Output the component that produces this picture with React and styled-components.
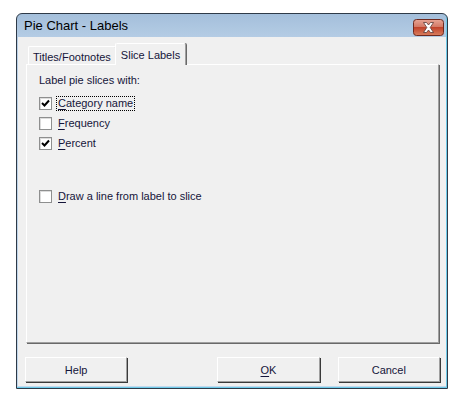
import * as React from "react";
import styled, { createGlobalStyle } from "styled-components";

const GlobalStyle = createGlobalStyle`
  html, body {
    margin: 0;
    background: #fff;
  }
  body {
    font-family: "Liberation Sans", Arial, sans-serif;
    font-size: 11px;
    color: #111;
  }
`;

// *** window chrome
const Page = styled.div`
  padding: 13px 0 0 16px;
`;
const Window = styled.div`
  box-sizing: border-box;
  width: 432px;
  height: 376px;
  display: flex;
  flex-direction: column;
  border: 1px solid #2e3a48;
  border-radius: 6px 6px 0 0;
  padding: 0 1px 2px 1px;
  background: linear-gradient(180deg, #a4bfdb 0%, #b9d0e7 8%, #c2d8ec 100%);
  box-shadow: inset -1px -1px 0 #6fcbe9;
`;
const TitleBar = styled.div`
  height: 23px;
  display: flex;
  align-items: center;
  justify-content: space-between;
  padding: 0 2px 0 6px;
`;
const Title = styled.span`
  font-size: 13px;
  color: #000;
`;
const CloseButton = styled.div`
  width: 31px;
  height: 17px;
  margin-top: 3px;
  display: flex;
`;
const Client = styled.div`
  flex: 1;
  display: flex;
  flex-direction: column;
  background: #f0f0f0;
  padding: 6px 6px 0 7px;
`;

// *** tabs
const TabStrip = styled.div`
  display: flex;
  align-items: flex-end;
  height: 21px;
  padding-left: 3px;
`;
const Tab = styled.div`
  box-sizing: border-box;
  display: flex;
  align-items: center;
  height: ${(p) => (p.$active ? "22px" : "18px")};
  padding: 0 ${(p) => (p.$active ? "5px" : "4px")};
  padding-top: ${(p) => (p.$active ? "0" : "2px")};
  margin-bottom: ${(p) => (p.$active ? "-1px" : "0")};
  margin-left: ${(p) => (p.$active ? "-1px" : "0")};
  background: #f0f0f0;
  border-top: 1px solid #fff;
  border-left: 1px solid #fff;
  border-right: 1px solid #a0a0a0;
  box-shadow: 1px 0 0 ${(p) => (p.$active ? "#696969" : "transparent")};
  border-radius: 2px 2px 0 0;
  position: relative;
  z-index: ${(p) => (p.$active ? 1 : 0)};
  color: #15153a;
`;
const Panel = styled.div`
  box-sizing: border-box;
  width: 413px;
  height: 279px;
  margin-left: 1px;
  background: #f0f0f0;
  border-top: 1px solid #fff;
  border-left: 1px solid #fff;
  border-right: 1px solid #a0a0a0;
  border-bottom: 1px solid #a0a0a0;
  box-shadow: 1px 1px 0 #696969;
  padding: 8px 12px;
  display: flex;
  flex-direction: column;
`;
const Heading = styled.div`
  line-height: 14px;
  color: #15153a;
`;
const OptionList = styled.div`
  display: flex;
  flex-direction: column;
  margin-top: 6px;
`;
const Option = styled.label`
  display: flex;
  align-items: center;
  height: 20px;
  gap: 4px;
  margin-top: ${(p) => p.$gap || 0}px;
  color: #15153a;
`;
const Box = styled.span`
  box-sizing: border-box;
  width: 13px;
  height: 13px;
  background: #fff;
  border: 1px solid #8e8f8f;
  box-shadow: inset 1px 1px 0 #dcdcdc;
  display: flex;
  align-items: center;
  justify-content: center;
`;
const Caption = styled.span`
  padding: 0 1px;
  border: 1px dotted ${(p) => (p.$focused ? "#000" : "transparent")};
  line-height: 13px;
`;
const Key = styled.span`
  text-decoration: underline;
  text-underline-offset: 2px;
`;

// *** buttons
const Footer = styled.div`
  display: flex;
  margin-top: 14px;
  gap: 18px;
`;
const Button = styled.button`
  box-sizing: border-box;
  width: 103px;
  height: 25px;
  margin-right: ${(p) => p.$push || 0}px;
  background: #f0f0f0;
  border: none;
  border-top: 1px solid #fff;
  border-left: 1px solid #fff;
  border-right: 1px solid #a0a0a0;
  border-bottom: 1px solid #a0a0a0;
  box-shadow: 1px 1px 0 #3a3a3a;
  font-family: inherit;
  font-size: 11px;
  color: #15153a;
  padding: 0;
`;

const Check = () => (
  <svg width="9" height="9" viewBox="0 0 9 9">
    <path d="M1 4 L3.5 6.5 L8 1.5" fill="none" stroke="#000" strokeWidth="2" />
  </svg>
);

const CloseGlyph = () => (
  <svg width="31" height="17" viewBox="0 0 31 17">
    <defs>
      <linearGradient id="closeRed" x1="0" y1="0" x2="0" y2="1">
        <stop offset="0" stopColor="#e8a595" />
        <stop offset="0.45" stopColor="#d47a66" />
        <stop offset="0.5" stopColor="#c1432b" />
        <stop offset="1" stopColor="#d97f5f" />
      </linearGradient>
    </defs>
    <rect x="0.5" y="0.5" width="30" height="16" rx="3" fill="url(#closeRed)" stroke="#6e2a20" />
    <path
      d="M10.5 3.5 H13.5 L15.5 6 L17.5 3.5 H20.5 L17.2 8.5 L20.5 13.5 H17.5 L15.5 11 L13.5 13.5 H10.5 L13.8 8.5 Z"
      fill="#fff"
      stroke="#5a3a36"
      strokeWidth="0.8"
    />
  </svg>
);

const options = [
  { key: "C", rest: "ategory name", checked: true, focused: true },
  { key: "F", rest: "requency", checked: false },
  { key: "P", rest: "ercent", checked: true },
  { key: "D", rest: "raw a line from label to slice", checked: false, gap: 33 },
];

const App = () => (
  <>
    <GlobalStyle />
    <Page>
      <Window>
        <TitleBar>
          <Title>Pie Chart - Labels</Title>
          <CloseButton>
            <CloseGlyph />
          </CloseButton>
        </TitleBar>
        <Client>
          <TabStrip>
            <Tab>Titles/Footnotes</Tab>
            <Tab $active>Slice Labels</Tab>
          </TabStrip>
          <Panel>
            <Heading>Label pie slices with:</Heading>
            <OptionList>
              {options.map((o) => (
                <Option key={o.key} $gap={o.gap}>
                  <Box>{o.checked && <Check />}</Box>
                  <Caption $focused={o.focused}>
                    <Key>{o.key}</Key>
                    {o.rest}
                  </Caption>
                </Option>
              ))}
            </OptionList>
          </Panel>
          <Footer>
            <Button $push={72}>Help</Button>
            <Button>
              <Key>O</Key>K
            </Button>
            <Button>Cancel</Button>
          </Footer>
        </Client>
      </Window>
    </Page>
  </>
);

export default App;
